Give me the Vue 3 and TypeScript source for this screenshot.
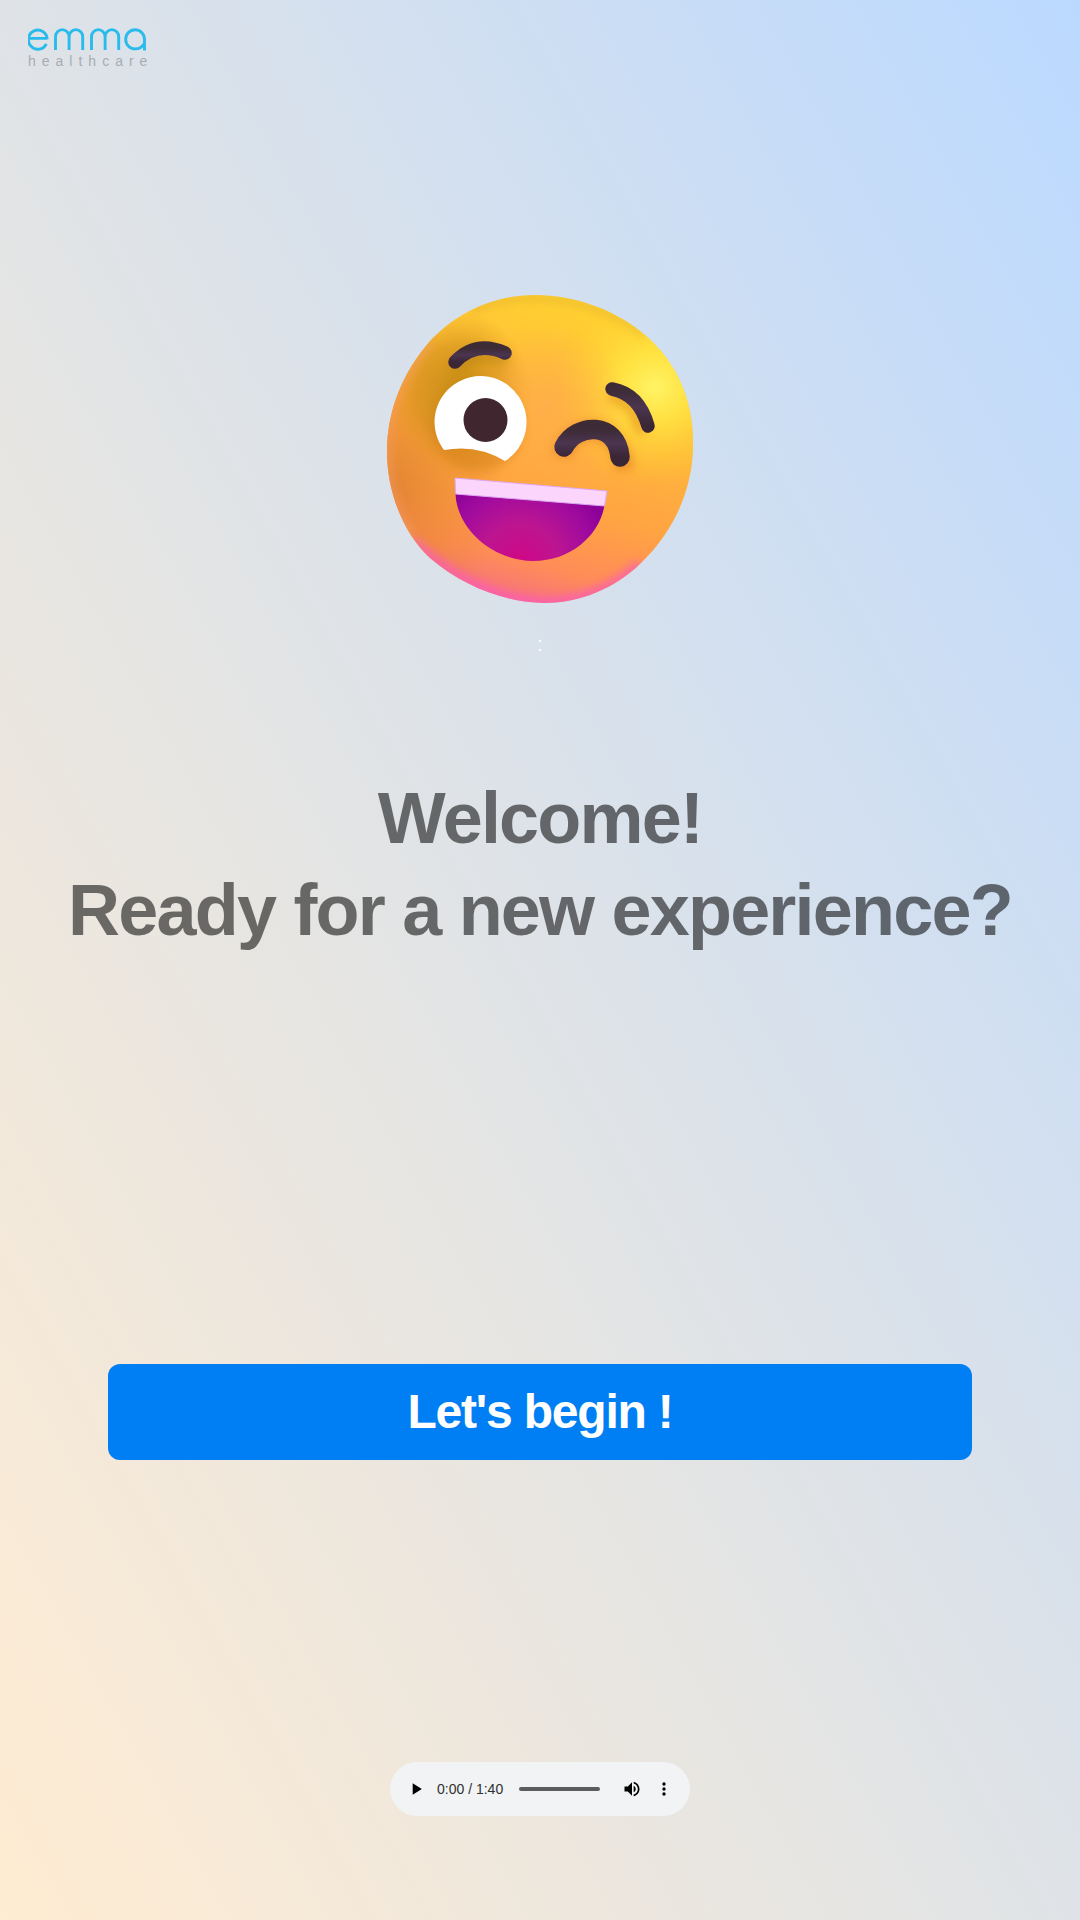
<script setup lang="ts">
import { ref } from 'vue'

const playing = ref<boolean>(false)
const position = ref<number>(0)
const elapsed = '0:00'
const duration = '1:40'
</script>

<template>
  <div class="page">
    <header class="top">
      <svg class="logo" viewBox="0 0 126 42" role="img" aria-label="emma healthcare">
        <g fill="none" stroke="#29bbec" stroke-width="2.9">
          <path d="M1.5 10.4H19M19.2 11.2A9.4 9.6 0 1 0 18.3 15.8" />
          <path d="M27.5 22V8.8a6.8 7.2 0 0 1 13.600 0V22M41.100 8.800a6.800 7.200 0 0 1 13.600 0V22" />
          <path d="M63.500 22V8.800a6.800 7.200 0 0 1 13.600 0V22M77.100 8.800a6.800 7.200 0 0 1 13.600 0V22" />
          <path d="M116.500 22.500V11.200A9.400 9.600 0 1 0 107.200 20.900Q113 20.900 116 16" />
        </g>
        <text x="0" y="38" class="tagline">healthcare</text>
      </svg>
    </header>

    <main class="content">
      <svg class="emoji" viewBox="0 0 340 340" role="img" aria-label="Winking face">
        <defs>
          <linearGradient id="skin" x1="0.7" y1="0.05" x2="0.45" y2="1">
            <stop offset="0" stop-color="#ffd530" />
            <stop offset="0.35" stop-color="#ffb93a" />
            <stop offset="0.65" stop-color="#ffa343" />
            <stop offset="0.83" stop-color="#ff8c58" />
            <stop offset="1" stop-color="#f2688c" />
          </linearGradient>
          <radialGradient id="shine">
            <stop offset="0" stop-color="#fff466" />
            <stop offset="0.35" stop-color="#ffe843" stop-opacity="0.8" />
            <stop offset="1" stop-color="#ffd02c" stop-opacity="0" />
          </radialGradient>
          <radialGradient id="shade">
            <stop offset="0" stop-color="#c58d14" />
            <stop offset="0.6" stop-color="#d08f18" stop-opacity="0.6" />
            <stop offset="1" stop-color="#e59a20" stop-opacity="0" />
          </radialGradient>
          <radialGradient id="side">
            <stop offset="0" stop-color="#dd8030" stop-opacity="0.8" />
            <stop offset="0.5" stop-color="#e8892e" stop-opacity="0.5" />
            <stop offset="1" stop-color="#e8892e" stop-opacity="0" />
          </radialGradient>
          <radialGradient id="glow">
            <stop offset="0" stop-color="#ffab4e" />
            <stop offset="1" stop-color="#ffa54e" stop-opacity="0" />
          </radialGradient>
          <radialGradient id="mouth" gradientUnits="userSpaceOnUse" cx="150" cy="282" r="95">
            <stop offset="0" stop-color="#d00786" />
            <stop offset="0.4" stop-color="#bd1590" />
            <stop offset="0.75" stop-color="#a00b9e" />
            <stop offset="1" stop-color="#8a0098" />
          </radialGradient>
          <linearGradient id="brow" x1="0" y1="0" x2="0" y2="1">
            <stop offset="0" stop-color="#3d2b35" />
            <stop offset="0.5" stop-color="#4b3550" />
            <stop offset="1" stop-color="#3a2635" />
          </linearGradient>
          <clipPath id="head">
            <path d="M165 15C205 15 246 30 275 55C307 82 324 122 323 165C323 210 303 253 270 284C245 308 210 323 175 323C133 322 93 306 60 278C32 252 17 210 17 172C17 130 33 92 60 61C88 31 125 15 165 15Z" />
          </clipPath>
          <filter id="edge" filterUnits="userSpaceOnUse" x="-20" y="-20" width="380" height="380">
            <feGaussianBlur stdDeviation="5" />
          </filter>
        </defs>
        <g clip-path="url(#head)">
          <rect width="340" height="340" fill="url(#skin)" />
          <ellipse cx="25" cy="205" rx="110" ry="160" fill="url(#side)" />
          <ellipse cx="285" cy="107" rx="105" ry="100" fill="url(#shine)" />
          <ellipse cx="90" cy="112" rx="72" ry="80" fill="url(#shade)" />
          <ellipse cx="178" cy="130" rx="80" ry="85" fill="url(#glow)" opacity="0.7" />
          <path d="M60 61C33 92 17 130 17 172C17 210 32 252 60 278" fill="none" stroke="#f59a66" stroke-width="7" opacity="0.7" filter="url(#edge)" />
          <path d="M42 262C93 306 133 322 175 323C210 323 245 308 270 284" fill="none" stroke="#fb5cba" stroke-width="10" opacity="0.85" filter="url(#edge)" />
          <path d="M100 31C165 0 246 30 275 55" fill="none" stroke="#d9a42c" stroke-width="6" opacity="0.5" filter="url(#edge)" />
          <path d="M191 176C202 139 248 141 255 190" fill="none" stroke="#e07920" stroke-width="18" opacity="0.6" filter="url(#edge)" />
          <path d="M239 116Q264 120 272 153" fill="none" stroke="#e99620" stroke-width="12" opacity="0.7" filter="url(#edge)" />
          <path d="M85 88Q108 68 137 81" fill="none" stroke="#b58010" stroke-width="12" opacity="0.5" filter="url(#edge)" />
          <circle cx="108" cy="146" r="46" fill="#cf7c18" opacity="0.45" filter="url(#edge)" />
        </g>
        <path d="M74 170A46 46 0 1 1 135 181Q107 164 74 170Z" fill="#fff" />
        <circle cx="115.500" cy="140" r="22" fill="#40262f" />
        <g fill="none" stroke="url(#brow)" stroke-linecap="round">
          <path d="M85 82Q106 60 135 73" stroke-width="13.500" />
          <path d="M242 109Q269 114 278 146" stroke-width="13.500" />
          <path d="M194 167C206 143 247 141 250 177" stroke-width="19.500" />
        </g>
        <path d="M85.500 213L234.500 225C230 254 202 281 163 281C119 280 86 246 85.500 213Z" fill="url(#mouth)" />
        <path d="M85 198L237 211L234.500 226L85.500 214Z" fill="#fbd5fb" stroke="#dca8f2" />
      </svg>
      <p class="mark">:</p>
      <h1 class="title">Welcome!<br />Ready for a new experience?</h1>
      <button type="button" class="begin">Let's begin !</button>
    </main>

    <footer class="player" role="group" aria-label="Audio player">
      <button type="button" class="control" aria-label="Play" :aria-pressed="playing" @click="playing = !playing">
        <svg viewBox="0 0 24 24" width="20" height="20"><path d="M8 5v14l11-7z" /></svg>
      </button>
      <span class="time">{{ elapsed }} / {{ duration }}</span>
      <input v-model.number="position" class="seek" type="range" min="0" max="100" aria-label="Seek" />
      <button type="button" class="control" aria-label="Mute">
        <svg viewBox="0 0 24 24" width="20" height="20">
          <path d="M3 9v6h4l5 5V4L7 9H3zm13.500 3A4.500 4.500 0 0 0 14 7.970v8.050c1.480-.73 2.500-2.250 2.500-4.020zM14 3.230v2.060c2.890.86 5 3.540 5 6.710s-2.110 5.850-5 6.710v2.060c4.010-.91 7-4.490 7-8.770s-2.990-7.860-7-8.770z" />
        </svg>
      </button>
      <button type="button" class="control" aria-label="More options">
        <svg viewBox="0 0 24 24" width="20" height="20">
          <path d="M12 8a2 2 0 1 0 0-4 2 2 0 0 0 0 4zm0 2a2 2 0 1 0 0 4 2 2 0 0 0 0-4zm0 6a2 2 0 1 0 0 4 2 2 0 0 0 0-4z" />
        </svg>
      </button>
    </footer>
  </div>
</template>

<style>
body {
  margin: 0;
}
</style>

<style scoped>
.page {
  display: flex;
  flex-direction: column;
  align-items: center;
  box-sizing: border-box;
  min-height: 100vh;
  padding: 28px 28px 104px;
  background: linear-gradient(to top right, #ffecd2, #dfe3e7 50%, #bbd9ff);
  font-family: "Liberation Sans", Arial, sans-serif;
}

.top {
  align-self: stretch;
}

.logo {
  display: block;
  width: 126px;
  height: 42px;
}

.tagline {
  fill: #a9acaf;
  font-family: "Liberation Sans", Arial, sans-serif;
  font-size: 14px;
  letter-spacing: 6px;
}

.content {
  display: flex;
  flex: 1;
  flex-direction: column;
  align-items: center;
  width: 100%;
}

.emoji {
  width: 340px;
  height: 340px;
  margin-top: 210px;
}

.mark {
  margin: 12px 0 0;
  color: #fff;
  font-size: 20px;
  line-height: 24px;
}

.title {
  margin: 116px 0 0;
  color: rgba(0, 0, 0, 0.55);
  font-size: 72px;
  font-weight: 700;
  line-height: 92px;
  letter-spacing: -0.025em;
  text-align: center;
}

.begin {
  width: calc(100% - 160px);
  height: 96px;
  margin-top: 408px;
  padding: 0 0 2px;
  border: 0;
  border-radius: 12px;
  background: #007ff5;
  color: #fff;
  font-family: inherit;
  font-size: 48px;
  font-weight: 700;
  letter-spacing: -0.025em;
}

.player {
  display: flex;
  align-items: center;
  box-sizing: border-box;
  width: 300px;
  height: 54px;
  padding: 0 10px;
  border-radius: 27px;
  background: #f1f3f4;
}

.control {
  display: grid;
  flex: none;
  place-items: center;
  width: 32px;
  height: 32px;
  padding: 0;
  border: 0;
  background: none;
}

.time {
  flex: none;
  margin-left: 5px;
  color: #303030;
  font-size: 14px;
}

.seek {
  flex: 1;
  min-width: 0;
  height: 4px;
  margin: 0 16px;
  border-radius: 2px;
  background: #5c5c5c;
  appearance: none;
}

.seek::-webkit-slider-thumb {
  width: 0;
  height: 0;
  appearance: none;
}
</style>
